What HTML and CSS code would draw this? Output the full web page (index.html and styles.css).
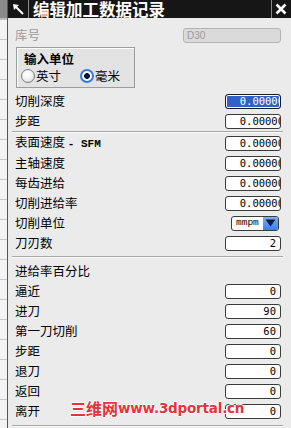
FILE: index.html
```html
<!DOCTYPE html>
<html>
<head>
<meta charset="utf-8">
<link rel="stylesheet" href="styles.css">
</head>
<body>
<div class="screen">
  <div class="strip"><div class="strip-top"></div></div>
  <div class="dialog">
    <div class="titlebar">
      <div class="pin">
        <svg width="14" height="14" viewBox="0 0 14 14"><path d="M12 12 L4 4" stroke="#fff" stroke-width="2"/><path d="M2 2 L8 3 L3 8 Z" fill="#fff"/></svg>
      </div>
      <div class="title">编辑加工数据记录</div>
      <div class="close">
        <svg width="12" height="12" viewBox="0 0 12 12"><path d="M1.5 1.5 L10.5 10.5 M10.5 1.5 L1.5 10.5" stroke="#fff" stroke-width="2.6"/></svg>
      </div>
    </div>
    <div class="body">
      <div class="row first"><span class="label dim">库号</span><div class="field wide disabled"><span>D30</span></div></div>
      <div class="group">
        <div class="legend">输入单位</div>
        <div class="radios">
          <span class="radio"></span><span class="rlabel">英寸</span>
          <span class="radio on"></span><span class="rlabel">毫米</span>
        </div>
      </div>
      <div class="row"><span class="label">切削深度</span><div class="field over selected"><span>0.00000</span></div></div>
      <div class="row"><span class="label">步距</span><div class="field over"><span>0.00000</span></div></div>
      <div class="sep"></div>
      <div class="row"><span class="label">表面速度 <span class="mono">- SFM</span></span><div class="field over"><span>0.00000</span></div></div>
      <div class="row"><span class="label">主轴速度</span><div class="field over"><span>0.00000</span></div></div>
      <div class="row"><span class="label">每齿进给</span><div class="field over"><span>0.00000</span></div></div>
      <div class="row"><span class="label">切削进给率</span><div class="field over"><span>0.00000</span></div></div>
      <div class="row"><span class="label">切削单位</span><div class="select"><span class="stext">mmpm</span><span class="sbtn"><svg width="11" height="8" viewBox="0 0 11 8"><path d="M0.5 0.5 H10.5 L5.5 7.5 Z" fill="#10203a"/></svg></span></div></div>
      <div class="row"><span class="label">刀刃数</span><div class="field"><span>2</span></div></div>
      <div class="sep sep2"></div>
      <div class="row"><span class="label">进给率百分比</span></div>
      <div class="row"><span class="label">逼近</span><div class="field"><span>0</span></div></div>
      <div class="row"><span class="label">进刀</span><div class="field"><span>90</span></div></div>
      <div class="row"><span class="label">第一刀切削</span><div class="field"><span>60</span></div></div>
      <div class="row"><span class="label">步距</span><div class="field"><span>0</span></div></div>
      <div class="row"><span class="label">退刀</span><div class="field"><span>0</span></div></div>
      <div class="row"><span class="label">返回</span><div class="field"><span>0</span></div></div>
      <div class="row"><span class="label">离开</span><div class="field"><span>0</span></div></div>
      <div class="sep sep3"></div>
    </div>
    <div class="watermark"><span class="wm-cn">三维网</span><span class="wm-en">www.3dportal.cn</span></div>
  </div>
</div>
</body>
</html>
```

FILE: styles.css
```css
html, body {
  margin: 0;
  padding: 0;
  background: #ebebeb;
}
.screen {
  display: flex;
  width: 291px;
  height: 428px;
  overflow: hidden;
  font-family: "Noto Sans CJK SC", sans-serif;
}
.strip {
  width: 7px;
  flex-shrink: 0;
  background: #f4f4f4 repeating-linear-gradient(to bottom, transparent 0, transparent 19px, #c8c8c8 19px, #c8c8c8 20px);
}
.strip-top {
  height: 18px;
  background: #8a8a8a;
  border-bottom: 2px solid #bdbdbd;
}
.dialog {
  position: relative;
  flex: 1;
  display: flex;
  flex-direction: column;
  border-left: 1px solid #555;
  background: #ebebeb;
}
.titlebar {
  height: 18px;
  display: flex;
  align-items: center;
  background: #161616;
}
.pin {
  width: 20px;
  height: 18px;
  display: flex;
  align-items: center;
  justify-content: center;
  border-right: 1px solid #8a8a8a;
}
.title {
  flex: 1;
  padding-left: 4px;
  color: #fff;
  font-weight: 700;
  font-size: 16.5px;
  line-height: 18px;
  white-space: nowrap;
}
.close {
  width: 18px;
  height: 18px;
  display: flex;
  align-items: center;
  justify-content: center;
  border-left: 1px solid #8a8a8a;
  margin-right: 1px;
}
.body {
  display: flex;
  flex-direction: column;
  padding: 7px 10px 0 7px;
}
.row {
  height: 20px;
  display: flex;
  align-items: center;
  justify-content: space-between;
}
.label {
  font-size: 12.5px;
  line-height: 1;
  color: #000;
  white-space: nowrap;
}
.label.dim {
  color: #9a9a9a;
}
.mono {
  font-family: "Liberation Mono", monospace;
  font-size: 11px;
  font-weight: 700;
}
.field {
  width: 56px;
  height: 15px;
  box-sizing: border-box;
  border: 1px solid #3a3a3a;
  border-radius: 3px;
  background: #fff;
  display: flex;
  align-items: center;
  justify-content: flex-end;
  padding-right: 4px;
  overflow: hidden;
  font-family: "DejaVu Sans Mono", monospace;
  font-size: 10.5px;
  color: #000;
}
.field span {
  flex-shrink: 0;
  white-space: nowrap;
}
.field.over span {
  margin-right: -8px;
}
.field.selected {
  border-color: #1a1a2a;
  background: #2f62c8;
  box-shadow: inset 0 0 0 1px #fff;
  color: #fff;
}
.field.wide {
  width: 98px;
}
.field.disabled {
  background: #dadada;
  border-color: #b4b4b4;
  color: #9a9a9a;
  justify-content: flex-start;
  padding-left: 3px;
  font-family: "Liberation Sans", sans-serif;
  font-size: 10px;
}
.group {
  margin: 2px 0 3px 1px;
  width: 119px;
  height: 41px;
  box-sizing: border-box;
  border: 1px solid #9c9c9c;
  box-shadow: inset 1px 1px 0 #fff;
  background: #e3e3e3;
  display: flex;
  flex-direction: column;
}
.legend {
  padding: 4px 0 0 7px;
  font-size: 12.5px;
  font-weight: 700;
  line-height: 13px;
}
.radios {
  display: flex;
  align-items: center;
  padding: 4px 0 0 4px;
}
.radio {
  width: 14px;
  height: 14px;
  box-sizing: border-box;
  border-radius: 50%;
  border: 1px solid #7c7c7c;
  background: radial-gradient(circle at 40% 35%, #ffffff 0, #f0f0f0 50%, #cfcfcf 100%);
  flex-shrink: 0;
}
.radio.on {
  margin-left: 19px;
  border: 2px solid #3a7ae0;
  background: radial-gradient(circle, #0a1840 0, #0a1840 2.6px, #ffffff 3.2px, #e8eef8 100%);
}
.rlabel {
  font-size: 12.5px;
  line-height: 1;
  margin-left: 1px;
}
.sep {
  height: 0;
  border-top: 1px solid #a8a8a8;
  border-bottom: 1px solid #fbfbfb;
  margin: 0 -2px 0 -3px;
}
.sep2 {
  margin-top: 3px;
  margin-bottom: 3px;
}
.sep3 {
  margin-top: 4px;
}
.select {
  width: 48px;
  height: 15px;
  box-sizing: border-box;
  margin-right: 2px;
  border: 1px solid #3a3a3a;
  border-radius: 3px;
  background: #fff;
  display: flex;
  align-items: center;
  overflow: hidden;
}
.stext {
  flex: 1;
  padding-left: 4px;
  font-family: "Liberation Mono", monospace;
  font-size: 9.5px;
  line-height: 1;
}
.sbtn {
  width: 15px;
  height: 13px;
  display: flex;
  align-items: center;
  justify-content: center;
  background: linear-gradient(#7fb0f5, #3c7ee6);
}
.watermark {
  position: absolute;
  left: 62px;
  top: 399px;
  display: flex;
  align-items: center;
  color: #e8313a;
  font-weight: 700;
  white-space: nowrap;
  text-shadow: -1px 0 0 #fff, 1px 0 0 #fff, 0 -1px 0 #fff, 0 1px 0 #fff;
}
.wm-cn {
  font-size: 16px;
  line-height: 18px;
}
.wm-en {
  font-family: "DejaVu Sans", sans-serif;
  font-size: 13.5px;
  line-height: 18px;
  letter-spacing: -0.2px;
}
```
